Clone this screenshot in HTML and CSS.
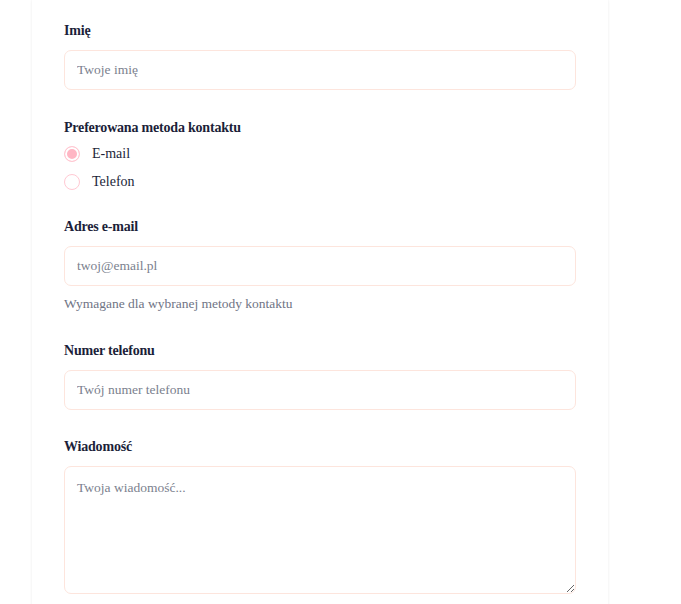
FILE: index.html
```html
<!DOCTYPE html>
<html lang="pl">
<head>
<meta charset="utf-8">
<title>Kontakt</title>
<link rel="stylesheet" href="styles.css">
</head>
<body>
<div class="page">
  <form class="card">
    <div class="field">
      <label class="label" for="name">Imię</label>
      <input class="input" id="name" type="text" placeholder="Twoje imię">
    </div>
    <div class="field field-radio">
      <div class="label label-tight">Preferowana metoda kontaktu</div>
      <div class="radios">
        <label class="radio-row"><input class="radio" type="radio" name="method" checked><span>E-mail</span></label>
        <label class="radio-row"><input class="radio" type="radio" name="method"><span>Telefon</span></label>
      </div>
    </div>
    <div class="field field-after-radio">
      <label class="label" for="email">Adres e-mail</label>
      <input class="input" id="email" type="email" placeholder="twoj@email.pl">
      <p class="help">Wymagane dla wybranej metody kontaktu</p>
    </div>
    <div class="field">
      <label class="label" for="phone">Numer telefonu</label>
      <input class="input" id="phone" type="tel" placeholder="Twój numer telefonu">
    </div>
    <div class="field">
      <label class="label" for="msg">Wiadomość</label>
      <textarea class="input textarea" id="msg" placeholder="Twoja wiadomość..."></textarea>
    </div>
  </form>
</div>
</body>
</html>
```
FILE: styles.css
```css
* { box-sizing: border-box; }
html, body { margin: 0; padding: 0; background: #ffffff; }
body {
  font-family: "Liberation Serif", "DejaVu Serif", serif;
  color: #1c1f3a;
  overflow: hidden;
}
.page {
  padding-left: 32px;
  height: 604px;
  overflow: hidden;
}
.card {
  width: 576px;
  min-height: 640px;
  background: #ffffff;
  padding: 20px 32px 0 32px;
  box-shadow: 0 0 3px rgba(0, 0, 0, 0.07), 0 0 1px rgba(0, 0, 0, 0.04);
  display: flex;
  flex-direction: column;
  gap: 26px;
}
.field { display: flex; flex-direction: column; }
.field-radio { margin-top: 1px; }
.field-after-radio { margin-top: -4px; }
.label {
  display: block;
  font-size: 14px;
  line-height: 20px;
  padding-top: 1px;
  font-weight: 700;
  letter-spacing: -0.2px;
  color: #1c1f3a;
  margin-bottom: 9px;
}
.label-tight { margin-bottom: 4px; }
.input {
  display: block;
  width: 512px;
  height: 40px;
  border: 1px solid #fde5dd;
  border-radius: 7px;
  padding: 0 12px;
  font-family: "Liberation Serif", "DejaVu Serif", serif;
  font-size: 13.5px;
  color: #1c1f3a;
  background: #ffffff;
  outline: none;
}
.input::placeholder { color: #7b7f8e; opacity: 1; }
.textarea {
  height: 128px;
  padding: 11px 12px;
  line-height: 20px;
  resize: vertical;
}
.help {
  margin: 8px 0 0 0;
  font-size: 13.5px;
  line-height: 20px;
  color: #6f7485;
}
.radios { display: flex; flex-direction: column; gap: 4px; }
.radio-row {
  display: flex;
  align-items: center;
  gap: 12px;
  height: 24px;
  font-size: 14px;
  color: #1c1f3a;
}
.radio {
  appearance: none;
  -webkit-appearance: none;
  margin: 0;
  width: 16px;
  height: 16px;
  border-radius: 50%;
  border: 1.5px solid #ffc9d3;
  background: #ffffff;
  flex: none;
}
.radio:checked {
  background: #ffb6c4;
  box-shadow: inset 0 0 0 2px #ffffff;
}
```
